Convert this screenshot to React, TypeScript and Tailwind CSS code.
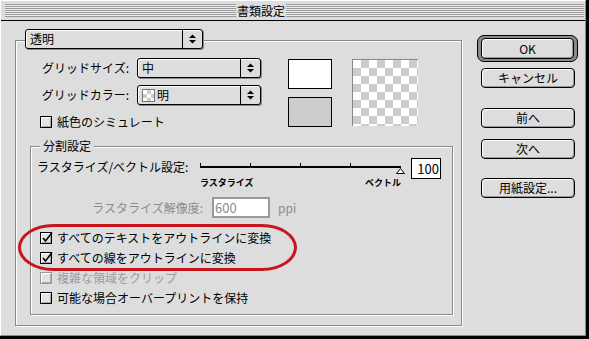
import React from "react";

const font = "font-['Noto_Sans_CJK_JP','Noto_Sans',sans-serif]";

function Arrows() {
  return (
    <svg width="7" height="10" viewBox="0 0 7 10">
      <path d="M0 4 L3.5 0.5 L7 4 Z" fill="black" />
      <path d="M0 6 L3.5 9.5 L7 6 Z" fill="black" />
    </svg>
  );
}

function Popup({ width, children }: { width: string; children: React.ReactNode }) {
  return (
    <div
      className={`flex h-[20px] ${width} items-stretch rounded-[3px] border border-black bg-[#dddddd] shadow-[1px_1px_0_#888888,inset_1px_1px_0_#ffffff]`}
    >
      <div className="flex flex-1 items-center gap-[2px] pl-[4px]">{children}</div>
      <div className="flex w-[20px] items-center justify-center border-l border-black">
        <Arrows />
      </div>
    </div>
  );
}

function Checkbox({
  label,
  checked,
  disabled,
}: {
  label: string;
  checked?: boolean;
  disabled?: boolean;
}) {
  return (
    <div className="flex items-center gap-[5px]">
      <div
        className={`relative h-[12px] w-[12px] shrink-0 border ${
          disabled ? "border-[#9a9a9a]" : "border-black"
        } bg-[#e4e4e4] shadow-[inset_1px_1px_0_#ffffff,inset_-1px_-1px_0_#a8a8a8]`}
      >
        {checked && (
          <svg className="absolute left-[0px] top-[-2px]" width="13" height="13" viewBox="0 0 13 13">
            <path d="M2 7 L4.5 10 L11 1.5" stroke="black" strokeWidth="1.6" fill="none" />
          </svg>
        )}
      </div>
      <span className={`whitespace-nowrap ${disabled ? "text-[#9c9c9c]" : "text-black"}`}>{label}</span>
    </div>
  );
}

function Btn({ children, extra }: { children: React.ReactNode; extra?: string }) {
  return (
    <div
      className={`flex h-[20px] w-[94px] items-center justify-center rounded-[4px] border border-black bg-[#dddddd] shadow-[inset_1px_1px_0_#ffffff,inset_-1px_-1px_0_#999999] ${
        extra ?? ""
      }`}
    >
      {children}
    </div>
  );
}

const checker =
  "bg-[image:conic-gradient(#cccccc_25%,#ffffff_0_50%,#cccccc_0_75%,#ffffff_0)]";

export default function App() {
  return (
    <div className={`${font} h-[339px] w-[589px] text-[12px] leading-none text-black`}>
      <div className="h-full w-full border-b-[3px] border-r-[3px] border-black">
        <div className="flex h-full w-full flex-col border border-b-[#888888] border-l-white border-r-[#888888] border-t-white bg-[#dddddd]">
          {/* title bar */}
          <div className="flex h-[20px] shrink-0 border-b border-black pl-[4px] pr-[1px] pt-[3px]">
            <div className="flex h-[13px] w-full">
              <div className="h-full w-[231px] bg-[image:repeating-linear-gradient(to_bottom,#999999_0_1px,#eeeeee_1px_2px)]" />
              <div className="flex h-full w-[50px] items-center justify-center whitespace-nowrap text-[12px]">書類設定</div>
              <div className="h-full flex-1 bg-[image:repeating-linear-gradient(to_bottom,#999999_0_1px,#eeeeee_1px_2px)]" />
            </div>
          </div>

          {/* body */}
          <div className="flex pl-[14px] pt-[14px]">
            {/* main group */}
            <div className="relative mt-[5px] h-[286px] w-[447px] shrink-0 border border-[#888888] shadow-[inset_1px_1px_0_#ffffff,1px_1px_0_#ffffff]">
              <div className="absolute left-[9px] top-[-12px]">
                <Popup width="w-[178px]">
                  <span>透明</span>
                </Popup>
              </div>

              {/* top section */}
              <div className="flex h-[105px] pt-[17px]">
                <div className="flex flex-col pl-[24px]">
                  <div className="flex items-center gap-[8px]">
                    <span className="w-[89px] whitespace-nowrap text-right">グリッドサイズ:</span>
                    <Popup width="w-[124px]">
                      <span>中</span>
                    </Popup>
                  </div>
                  <div className="mt-[7px] flex items-center gap-[8px]">
                    <span className="w-[89px] whitespace-nowrap text-right">グリッドカラー:</span>
                    <Popup width="w-[124px]">
                      <div className={`h-[13px] w-[13px] border border-[#777777] ${checker} bg-[length:8px_8px]`} />
                      <span>明</span>
                    </Popup>
                  </div>
                  <div className="mt-[11px]">
                    <Checkbox label="紙色のシミュレート" />
                  </div>
                </div>
                <div className="ml-[27px] flex flex-col gap-[8px] pt-[1px]">
                  <div className="h-[30px] w-[44px] border border-black bg-white" />
                  <div className="h-[30px] w-[44px] border border-black bg-[#cccccc]" />
                </div>
                <div
                  className={`ml-[20px] mt-[1px] h-[67px] w-[66px] border-l border-t border-[#888888] ${checker} bg-[length:16px_16px]`}
                />
              </div>

              {/* inner group */}
              <div className="relative ml-[14px] h-[169px] w-[423px] border border-[#888888] shadow-[inset_1px_1px_0_#ffffff,1px_1px_0_#ffffff]">
                <div className="absolute left-[9px] top-[-8px] whitespace-nowrap bg-[#dddddd] px-[3px] leading-[14px]">分割設定</div>

                <div className="flex items-start pl-[6px] pt-[11px]">
                  <span className="mt-[-1px] w-[163px] whitespace-nowrap leading-[20px]">ラスタライズ/ベクトル設定:</span>
                  <div className="relative h-[32px] w-[211px]">
                    <div className="absolute left-0 top-[8px] h-[2px] w-[201px] bg-black" />
                    <div className="absolute left-0 top-[5px] h-[3px] w-[1px] bg-black" />
                    <div className="absolute left-[50px] top-[5px] h-[3px] w-[1px] bg-black" />
                    <div className="absolute left-[100px] top-[5px] h-[3px] w-[1px] bg-black" />
                    <div className="absolute left-[150px] top-[5px] h-[3px] w-[1px] bg-black" />
                    <svg className="absolute left-[196px] top-[10px]" width="9" height="6" viewBox="0 0 9 6">
                      <path d="M4.5 0.5 L8.5 5.5 L0.5 5.5 Z" fill="white" stroke="black" strokeWidth="1" />
                    </svg>
                    <span className="absolute left-0 top-[20px] whitespace-nowrap text-[9px] font-bold leading-none">ラスタライズ</span>
                    <span className="absolute left-[165px] top-[20px] whitespace-nowrap text-[9px] font-bold leading-none">ベクトル</span>
                  </div>
                  <div className="flex h-[21px] w-[30px] items-center justify-end border border-black bg-white pr-[1px] text-[13px]">
                    100
                  </div>
                </div>

                <div className="mt-[7px] flex items-center pl-[61px] text-[#8c8c8c]">
                  <span className="w-[111px] whitespace-nowrap text-right">ラスタライズ解像度:</span>
                  <div className="ml-[9px] flex h-[21px] w-[58px] items-center border-2 border-[#999999] bg-white pl-[1px] text-[13px]">
                    600
                  </div>
                  <span className="ml-[8px]">ppi</span>
                </div>

                <div className="mt-[10px] flex flex-col pl-[9px]">
                  <div className="flex h-[20px] items-center">
                    <Checkbox label="すべてのテキストをアウトラインに変換" checked />
                  </div>
                  <div className="flex h-[20px] items-center">
                    <Checkbox label="すべての線をアウトラインに変換" checked />
                  </div>
                  <div className="flex h-[20px] items-center">
                    <Checkbox label="複雑な領域をクリップ" disabled />
                  </div>
                  <div className="flex h-[20px] items-center">
                    <Checkbox label="可能な場合オーバープリントを保持" />
                  </div>
                </div>
              </div>

              {/* red highlight */}
              <div className="pointer-events-none absolute left-[2px] top-[183px] h-[47px] w-[279px] rounded-[36px/24px] border-[3px] border-[#c8141c]" />
            </div>

            {/* buttons */}
            <div className="ml-[15px] flex w-[101px] flex-col items-start">
              <div className="h-[27px] w-[101px] rounded-[7px] border border-black bg-[#8a8a8a] px-[3px] py-[2px]">
                <div className="flex h-full w-full items-center justify-center rounded-[4px] border border-black bg-[#dddddd] shadow-[inset_1px_1px_0_#ffffff,inset_-1px_-1px_0_#999999]">
                  OK
                </div>
              </div>
              <div className="pl-[4px]">
                <Btn extra="mt-[6px]">キャンセル</Btn>
                <Btn extra="mt-[20px]">前へ</Btn>
                <Btn extra="mt-[11px]">次へ</Btn>
                <Btn extra="mt-[19px]">用紙設定...</Btn>
              </div>
            </div>
          </div>
        </div>
      </div>
    </div>
  );
}
